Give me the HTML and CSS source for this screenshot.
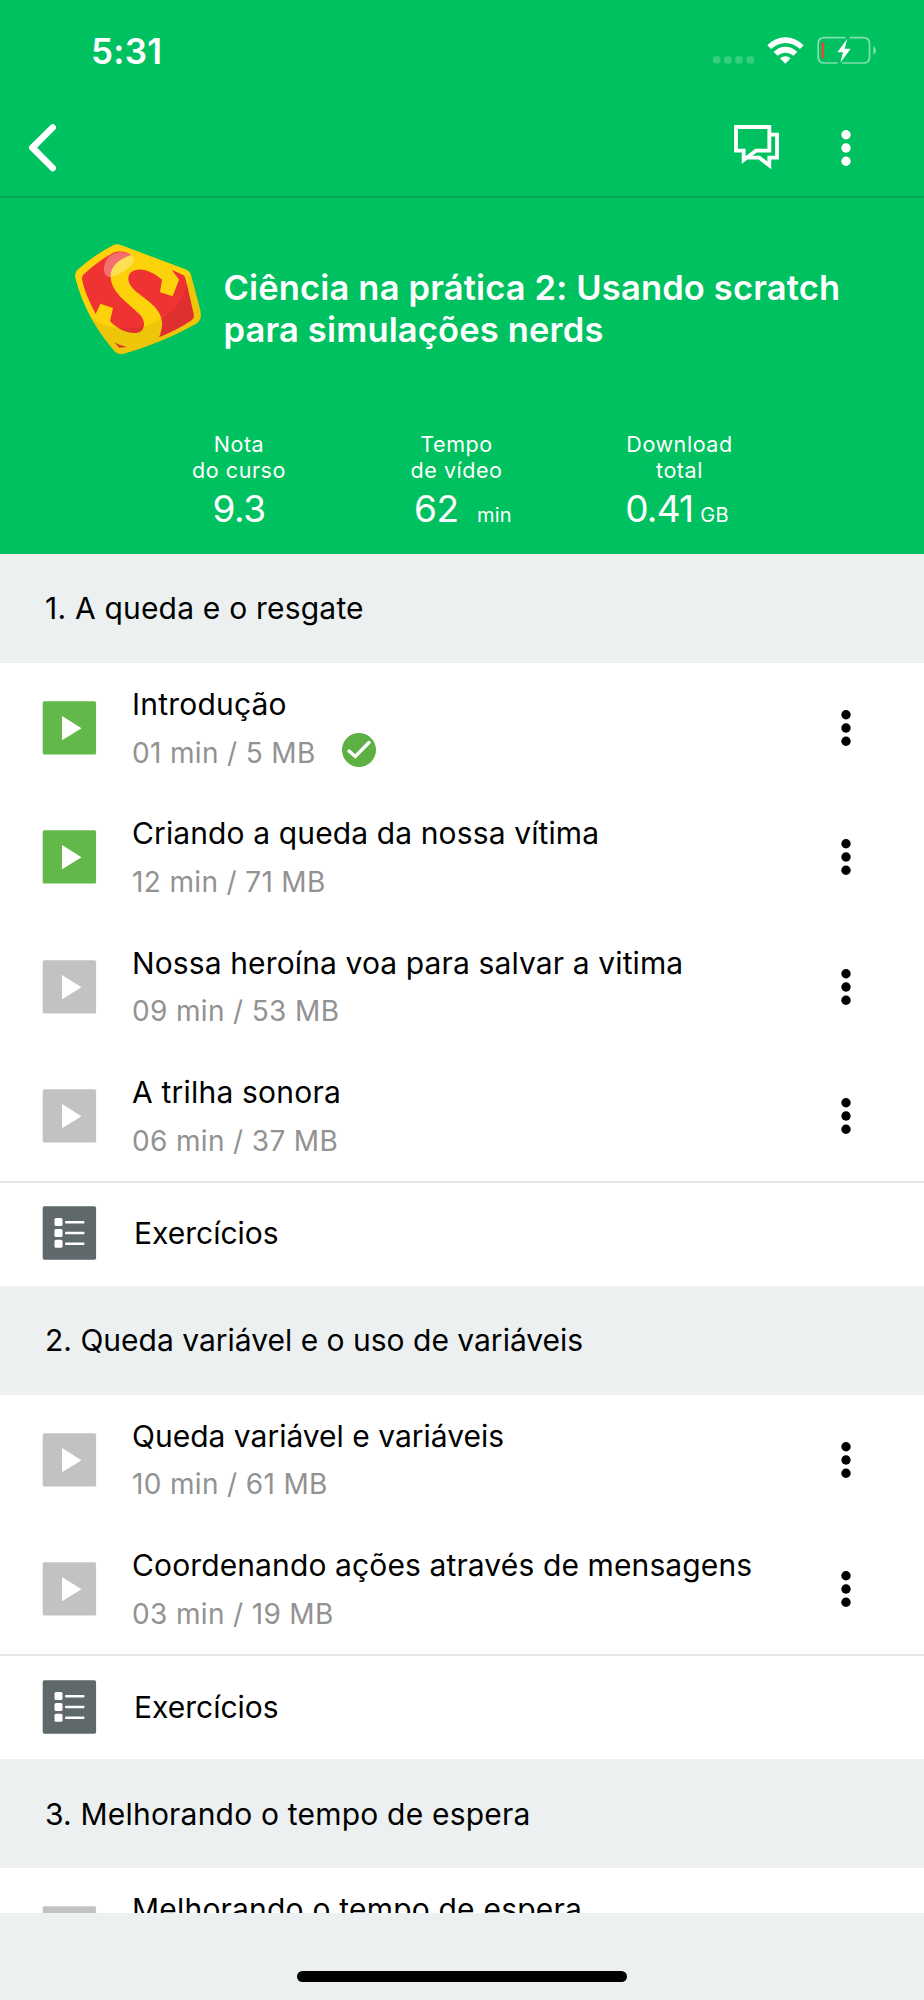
FILE: index.html
```html
<!DOCTYPE html>
<html lang="pt-BR">
<head>
<meta charset="utf-8">
<title>Ciência na prática 2</title>
<link rel="stylesheet" href="styles.css">
</head>
<body>
<svg class="defs" width="0" height="0" aria-hidden="true">
  <symbol id="dots" viewBox="0 0 12 38"><circle cx="6" cy="5.7" r="4.7"/><circle cx="6" cy="19" r="4.7"/><circle cx="6" cy="32.3" r="4.7"/></symbol>
  <symbol id="play" viewBox="0 0 55 54"><rect x=".7" y=".2" width="53.4" height="53.4" rx="1.6"/><path d="M20 15v24.300L39.500 27.200z" fill="#fff"/></symbol>
  <symbol id="list" viewBox="0 0 55 54"><rect x=".7" y=".3" width="53.4" height="53.4" rx="1.6"/><g fill="#fff"><rect x="12.500" y="12" width="8" height="8" rx="1.500"/><rect x="12.500" y="23" width="8" height="8" rx="1.500"/><rect x="12.500" y="33.800" width="8" height="8" rx="1.500"/><rect x="23" y="15" width="19.500" height="2.600" rx="1"/><rect x="23" y="25.700" width="19.500" height="2.600" rx="1"/><rect x="23" y="36.500" width="19.500" height="2.600" rx="1"/></g></symbol>
</svg>
<div class="screen">
  <header class="top">
    <div class="status">
      <span class="clock">5:31</span>
      <svg class="signal" viewBox="68 51 123 80"><g fill="#fff" fill-opacity=".22"><rect x="68" y="108" width="22" height="22" rx="6"/><rect x="101.500" y="108" width="22" height="22" rx="6"/><rect x="135" y="108" width="22" height="22" rx="6"/><rect x="168.500" y="108" width="22" height="22" rx="6"/></g></svg>
      <svg class="wifi" viewBox="230 50 111 81"><g fill="#fff"><path d="M231 75C262 43 308 43 340 75L329 86C303 62 268 62 242 86z"/><path d="M250 95C270 74 301 74 321 95L309 106C295 94 276 94 262 106z"/><path d="M269 114C278 106 293 106 301 114L285 130z"/></g></svg>
      <svg class="battery" viewBox="380 48 180 86"><g fill="none" stroke="#fff" stroke-opacity=".5" stroke-width="5"><path d="M466 53H402Q383.500 53 383.500 72V110Q383.500 129 402 129H442"/><path d="M478 53H519Q537.500 53 537.500 72V110Q537.500 129 519 129H456"/></g><path d="M549 78Q557 83 557 91T549 105z" fill="#fff" fill-opacity=".5"/><rect x="394" y="67" width="6.500" height="49" rx="3" fill="#ff3b30"/><path d="M471 56L441 97H458L450 128L481 86H463z" fill="#fff"/></svg>
    </div>
    <nav class="nav">
      <svg class="back" viewBox="28 123 30 49"><path d="M52.700 127.500L32.400 147.700L52.700 168" fill="none" stroke="#fff" stroke-width="6.600" stroke-linecap="round" stroke-linejoin="round"/></svg>
      <svg class="chat" viewBox="132 315 135 135"><g fill="none" stroke="#fff" stroke-width="11.500"><path d="M138 321H238V392H198L161 420V392H138z"/><path d="M243 344H261V413H238V436L208 413H172"/></g></svg>
      <svg class="more more-light"><use href="#dots"/></svg>
    </nav>
  </header>
  <section class="hero">
    <div class="course">
      <svg class="logo" viewBox="42 38 384 336">
        <defs><clipPath id="badge"><path d="M162 43Q173 40 185 45L380 118Q390 123 393 133L421 240Q424 258 421 265Q417 276 402 284Q300 340 192 370Q175 374 165 364Q130 325 100 275Q60 203 46 142Q43 128 52 119Q100 75 162 43z"/></clipPath></defs>
        <g clip-path="url(#badge)">
          <rect x="40" y="36" width="390" height="340" fill="#fdd20a"/>
          <path fill="#ef3232" d="M160 67Q190 58 214 74C172 88 150 110 152 142C157 190 202 215 238 251C255 268 256 288 244 302C228 315 183 308 150 272L159 233L121 220L107 251Q74 190 66 147Q65 136 72 131Q115 92 160 67z"/>
          <path fill="#ef3232" d="M205 145C205 113 253 103 306 148L300 186L338 198L357 148L335 118L371 135Q376 139 378 150L402 255Q403 264 395 270Q350 300 297 321C312 288 310 258 284 229C252 195 206 179 205 145z"/>
          <path fill="#ef3232" d="M163 336Q180 347 201 350L178 352z"/>
          <path fill="#000" fill-opacity=".06" d="M95 265C190 325 370 300 391 115L440 120V390H90z"/>
          <path fill="#fff" fill-opacity=".3" d="M150 140C128 138 127 108 141 86C156 65 190 59 214 74C229 84 220 102 200 117C185 128 165 140 150 140z"/>
        </g>
      </svg>
      <h1 class="course-title">Ciência na prática 2: Usando scratch<br>para simulações nerds</h1>
    </div>
    <div class="stats">
      <div class="stat grade"><span class="label">Nota<br>do curso</span><span class="value">9.3</span></div>
      <div class="stat time"><span class="label">Tempo<br>de vídeo</span><span class="value">62<small class="unit">min</small></span></div>
      <div class="stat download"><span class="label">Download<br>total</span><span class="value">0.41<small class="unit">GB</small></span></div>
    </div>
  </section>
  <main class="lessons">
    <h2 class="section loose">1. A queda e o resgate</h2>
    <div class="item"><svg class="icon done"><use href="#play"/></svg><div class="text"><div class="name loose">Introdução</div><div class="meta">01 min / 5 MB<svg class="check" viewBox="0 0 34 34"><circle cx="17" cy="17" r="17" fill="#5db043"/><path d="M7 18L13.300 23.500L27 9.500" fill="none" stroke="#fff" stroke-width="3.400" stroke-linecap="round"/></svg></div></div><svg class="more"><use href="#dots"/></svg></div>
    <div class="item"><svg class="icon done"><use href="#play"/></svg><div class="text"><div class="name">Criando a queda da nossa vítima</div><div class="meta">12 min / 71 MB</div></div><svg class="more"><use href="#dots"/></svg></div>
    <div class="item"><svg class="icon"><use href="#play"/></svg><div class="text"><div class="name">Nossa heroína voa para salvar a vitima</div><div class="meta">09 min / 53 MB</div></div><svg class="more"><use href="#dots"/></svg></div>
    <div class="item"><svg class="icon"><use href="#play"/></svg><div class="text"><div class="name loose">A trilha sonora</div><div class="meta">06 min / 37 MB</div></div><svg class="more"><use href="#dots"/></svg></div>
    <div class="exercises"><svg class="icon quiz"><use href="#list"/></svg><span class="name tight">Exercícios</span></div>
    <h2 class="section tight">2. Queda variável e o uso de variáveis</h2>
    <div class="item"><svg class="icon"><use href="#play"/></svg><div class="text"><div class="name tight">Queda variável e variáveis</div><div class="meta">10 min / 61 MB</div></div><svg class="more"><use href="#dots"/></svg></div>
    <div class="item"><svg class="icon"><use href="#play"/></svg><div class="text"><div class="name">Coordenando ações através de mensagens</div><div class="meta">03 min / 19 MB</div></div><svg class="more"><use href="#dots"/></svg></div>
    <div class="exercises"><svg class="icon quiz"><use href="#list"/></svg><span class="name tight">Exercícios</span></div>
    <h2 class="section loose">3. Melhorando o tempo de espera</h2>
    <div class="item"><svg class="icon"><use href="#play"/></svg><div class="text"><div class="name loose">Melhorando o tempo de espera</div></div></div>
  </main>
  <footer class="bottom"><div class="home-bar"></div></footer>
</div>
</body>
</html>
```
FILE: styles.css
```css
* { box-sizing: border-box; }
body { margin: 0; font-family: Inter, "Liberation Sans", sans-serif; color: #000; }
svg { display: block; flex: none; }
.defs { position: absolute; }
h1, h2 { margin: 0; font-weight: 400; }

.screen { width: 924px; height: 2000px; display: flex; flex-direction: column; overflow: hidden; background: #fff; }

.top { flex: none; height: 198px; background: #00c15f; border-bottom: 2px solid #04ab57; color: #fff; }
.status { height: 101px; padding: 0 47px 0 91px; display: flex; align-items: center; }
.clock { font-size: 35px; font-weight: 600; line-height: 40px; letter-spacing: .3px; margin-right: auto; }
.signal { width: 41px; height: 27px; margin-right: 13px; }
.wifi { width: 37px; height: 27px; margin-right: 13px; }
.battery { width: 60px; height: 28.700px; }
.nav { height: 93px; padding: 0 72px 0 28px; display: flex; align-items: center; }
.back { width: 30px; height: 49px; margin-right: auto; }
.chat { width: 45px; height: 45px; margin-right: 61px; }
.more { width: 12px; height: 38px; fill: #000; }
.more-light { fill: #fff; }

.hero { flex: none; height: 355.700px; padding: 45px 0 0; background: #00c15f; color: #fff; }
.course { display: flex; align-items: flex-start; padding-left: 74px; }
.logo { width: 128px; height: 112px; }
.course-title { margin: 23.500px 0 0 21.500px; font-size: 34.5px; font-weight: 600; line-height: 42.300px; letter-spacing: .16px; white-space: nowrap; }
.stats { display: flex; margin-top: 76px; padding-left: 129px; }
.stat { width: 220px; display: flex; flex-direction: column; align-items: center; }
.stat.time { width: 215px; }
.stat.download { width: 231px; }
.label { font-size: 21.500px; line-height: 26px; letter-spacing: .55px; text-align: center; }
.value { margin-top: 3px; font-size: 37px; line-height: 46px; letter-spacing: -.5px; white-space: nowrap; }
.unit { font-size: 20px; letter-spacing: .2px; margin-left: 6px; }
.time .value { padding-left: 13px; }
.time .unit { margin-left: 18.500px; }
.download .value { padding-right: 5px; letter-spacing: -.8px; }
.download .unit { margin-left: 7px; }

.lessons { flex: none; height: 1359.300px; overflow: hidden; }
.section { height: 109.200px; padding-left: 45px; display: flex; align-items: center; background: #ecf0f1; font-size: 30px; }
.item { height: 129.500px; padding: 0 72px 0 42px; display: flex; align-items: center; }
.icon { width: 55px; height: 54px; fill: #c2c2c2; }
.icon.done { fill: #62b849; }
.icon.quiz { fill: #5f686b; }
.text { flex: 1; height: 88px; padding-left: 35px; display: flex; flex-direction: column; gap: 9px; }
.name { font-size: 30px; line-height: 40px; letter-spacing: .12px; white-space: nowrap; }
.meta { display: flex; align-items: center; height: 40px; font-size: 28px; letter-spacing: .35px; color: #929292; white-space: nowrap; }
.loose { letter-spacing: .2px; }
.tight { letter-spacing: 0; }
.check { width: 34px; height: 34px; margin: 0 0 6px 26px; }
.exercises { height: 105px; padding: 0 42px 2px; display: flex; align-items: center; gap: 37px; border-top: 2px solid #e6e6e6; }

.bottom { flex: 1; padding-top: 58px; background: #ecf0f1; }
.home-bar { width: 330px; height: 11px; margin: 0 auto; border-radius: 6px; background: #000; }
```
